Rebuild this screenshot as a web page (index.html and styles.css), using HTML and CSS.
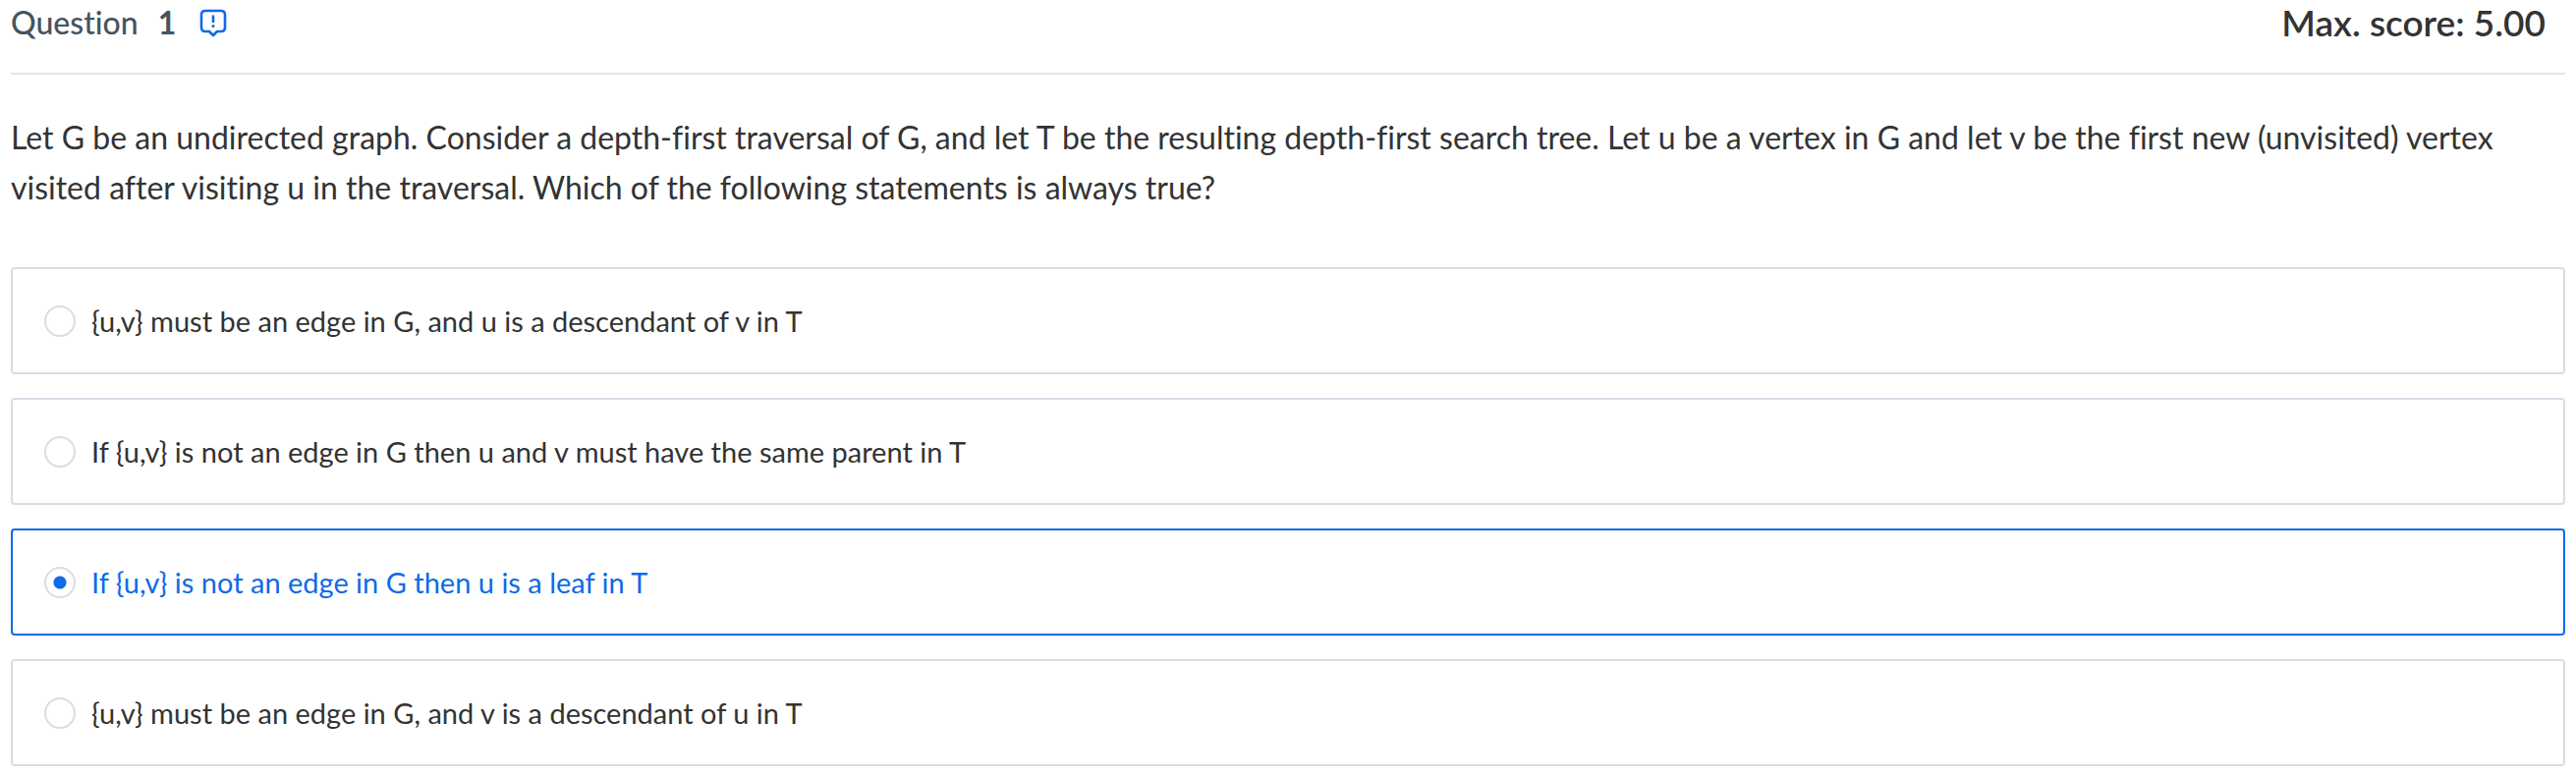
FILE: index.html
```
<!DOCTYPE html>
<html lang="en">
<head>
<meta charset="utf-8">
<meta name="viewport" content="width=device-width, initial-scale=1">
<title>Question 1</title>
<link rel="stylesheet" href="styles.css">
</head>
<body>
<main class="question">
  <header class="question-header">
    <h1 class="question-title"><span>Question</span><span class="question-number">1</span></h1>
    <button class="report" type="button" aria-label="Report a problem">
      <svg class="report-icon" viewBox="0 0 28 30" aria-hidden="true">
        <path d="M6 3H22Q26 3 26 7V20Q26 24 22 24H18L14 28L10 24H6Q2 24 2 20V7Q2 3 6 3Z" fill="none" stroke="currentColor" stroke-width="2.6" stroke-linejoin="round"/>
        <path d="M14 8.6V14" stroke="currentColor" stroke-width="2.6" stroke-linecap="round"/>
        <circle cx="14" cy="18.5" r="1.5" fill="currentColor"/>
      </svg>
    </button>
    <p class="score">Max. score: 5.00</p>
  </header>
  <p class="prompt" id="prompt">Let G be an undirected graph. Consider a depth-first traversal of G, and let T be the resulting depth-first search tree. Let u be a vertex in G and let v be the first new (unvisited) vertex visited after visiting u in the traversal. Which of the following statements is always true?</p>
  <form class="options" role="radiogroup" aria-labelledby="prompt">
    <label class="option"><input class="option-radio" type="radio" name="answer" value="a"><span>{u,v} must be an edge in G, and u is a descendant of v in T</span></label>
    <label class="option"><input class="option-radio" type="radio" name="answer" value="b"><span>If {u,v} is not an edge in G then u and v must have the same parent in T</span></label>
    <label class="option"><input class="option-radio" type="radio" name="answer" value="c" checked><span>If {u,v} is not an edge in G then u is a leaf in T</span></label>
    <label class="option"><input class="option-radio" type="radio" name="answer" value="d"><span>{u,v} must be an edge in G, and v is a descendant of u in T</span></label>
  </form>
</main>
</body>
</html>
```

FILE: styles.css
```
* {
  box-sizing: border-box;
}

body {
  margin: 0;
  background: #fff;
  color: #333;
  font-family: Lato, "Open Sans", sans-serif;
  font-variant-ligatures: none;
}

.question {
  padding: 0 11px;
}

.question-header {
  display: flex;
  align-items: center;
  padding: 0 20px 28px 0;
  border-bottom: 2px solid #e7e7e7;
}

.question-title {
  display: flex;
  gap: 20px;
  margin: 0;
  color: #46535e;
  font-size: 32px;
  font-weight: 500;
  line-height: 46px;
}

.question-number {
  font-weight: 700;
}

.report {
  display: flex;
  margin-left: 24px;
  padding: 0;
  border: 0;
  background: none;
  color: #0f6ae8;
  cursor: pointer;
}

.report-icon {
  width: 28px;
  height: 30px;
}

.score {
  margin: 0 0 0 auto;
  font-size: 37px;
  font-weight: 600;
  line-height: 46px;
}

.prompt {
  margin: 38px 0 56px;
  font-size: 32px;
  line-height: 51px;
}

.options {
  display: flex;
  flex-direction: column;
  gap: 24px;
}

.option {
  display: flex;
  align-items: center;
  gap: 16px;
  padding: 34px 32px;
  border: 2px solid #d8dce7;
  border-radius: 4px;
  font-size: 29px;
  line-height: 37px;
  cursor: pointer;
}

.option:has(:checked) {
  border-color: #0f6ae8;
  color: #0f6ae8;
}

.option-radio {
  appearance: none;
  flex: none;
  width: 32px;
  height: 32px;
  margin: 0;
  border: 2px solid #d8dce7;
  border-radius: 50%;
  background: #fff;
}

.option-radio:checked {
  background: radial-gradient(circle, #0f6ae8 0 6px, #fff 7px);
}
```
